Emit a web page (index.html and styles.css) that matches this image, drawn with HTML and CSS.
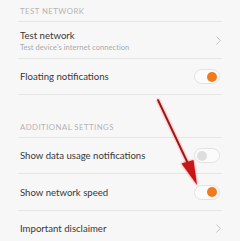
FILE: index.html
```html
<!DOCTYPE html>
<html>
<head>
<meta charset="utf-8">
<link rel="stylesheet" href="styles.css">
</head>
<body>
<div class="page">
  <div class="header">TEST NETWORK</div>
  <div class="row tall">
    <div class="texts">
      <div class="title">Test network</div>
      <div class="sub">Test device's internet connection</div>
    </div>
    <svg class="chev" width="5" height="9" viewBox="0 0 5 9"><path d="M0.5 0.5 L4.3 4.5 L0.5 8.5" fill="none" stroke="#bdbdbd" stroke-width="0.9"/></svg>
  </div>
  <div class="row">
    <div class="title">Floating notifications</div>
    <span class="toggle on"><span class="knob"></span></span>
  </div>
  <div class="spacer"></div>
  <div class="header">ADDITIONAL SETTINGS</div>
  <div class="row">
    <div class="title">Show data usage notifications</div>
    <span class="toggle"><span class="knob"></span></span>
  </div>
  <div class="row tall">
    <div class="title">Show network speed</div>
    <span class="toggle on"><span class="knob"></span></span>
  </div>
  <div class="row last">
    <div class="title">Important disclaimer</div>
    <svg class="chev" width="5" height="9" viewBox="0 0 5 9"><path d="M0.5 0.5 L4.3 4.5 L0.5 8.5" fill="none" stroke="#bdbdbd" stroke-width="0.9"/></svg>
  </div>
</div>
<svg class="arrow" width="240" height="241" viewBox="0 0 240 241">
  <defs>
    <filter id="glow" x="-50%" y="-50%" width="200%" height="200%">
      <feGaussianBlur in="SourceAlpha" stdDeviation="1.3" result="b"/>
      <feFlood flood-color="#ff2a2a" flood-opacity="0.75"/>
      <feComposite in2="b" operator="in" result="g"/>
      <feMerge><feMergeNode in="g"/><feMergeNode in="SourceGraphic"/></feMerge>
    </filter>
  </defs>
  <g filter="url(#glow)">
    <line x1="158" y1="100" x2="191" y2="170" stroke="#981515" stroke-width="1.8" stroke-linecap="round"/>
    <polygon points="197,185 181.5,163.5 193.5,160" fill="#c81818"/>
  </g>
</svg>
</body>
</html>
```

FILE: styles.css
```css
html, body {
  margin: 0;
  padding: 0;
  background: #f7f7f7;
}
body {
  width: 240px;
  height: 241px;
  overflow: hidden;
  position: relative;
  font-family: "Lato", "Liberation Sans", sans-serif;
}
.page {
  margin: 0 18px 0 18px;
}
.header {
  height: 21px;
  line-height: 22px;
  padding-left: 2px;
  font-size: 7.8px;
  color: #b4b4b4;
  letter-spacing: 0.45px;
  border-bottom: 1px solid #e6e6e6;
}
.spacer {
  height: 21px;
}
.row {
  height: 35px;
  border-bottom: 1px solid #e6e6e6;
  display: flex;
  align-items: center;
  justify-content: space-between;
  padding-left: 2px;
  padding-right: 2px;
}
.row.tall {
  height: 36px;
}
.row.last {
  border-bottom: none;
}
.texts {
  display: flex;
  flex-direction: column;
  gap: 1px;
  padding-top: 1px;
}
.title {
  font-size: 9.6px;
  color: #383838;
  line-height: 13px;
}
.sub {
  font-size: 7.5px;
  color: #ababab;
  line-height: 10px;
  letter-spacing: 0.05px;
}
.chev {
  display: block;
  margin-right: -1px;
}
.toggle {
  width: 20px;
  height: 13px;
  border: 1px solid #e2e2e2;
  border-radius: 8px;
  background: #fbfbfb;
  display: flex;
  align-items: center;
  padding: 0 2px;
  box-sizing: content-box;
}
.toggle .knob {
  width: 10px;
  height: 10px;
  border-radius: 50%;
  background: #dedede;
}
.toggle.on {
  justify-content: flex-end;
}
.toggle.on .knob {
  background: #f07b1e;
}
.arrow {
  position: absolute;
  left: 0;
  top: 0;
  pointer-events: none;
}
```
